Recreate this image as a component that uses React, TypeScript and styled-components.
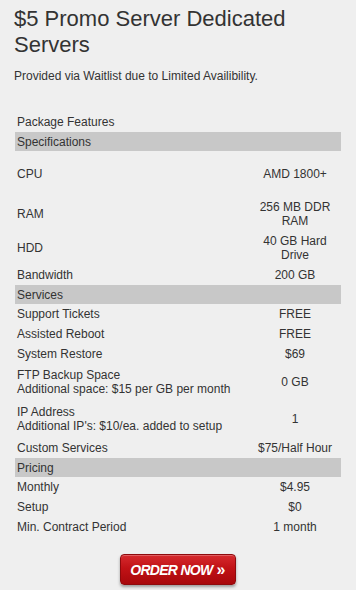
import React from "react"
import styled, { createGlobalStyle } from "styled-components"

interface Row {
  label: string
  note?: string
  value: string
}

interface Section {
  title: string
  rows: Row[]
}

const sections: Section[] = [
  {
    title: "Specifications",
    rows: [
      { label: "CPU", value: "AMD 1800+" },
      { label: "RAM", value: "256 MB DDR RAM" },
      { label: "HDD", value: "40 GB Hard Drive" },
      { label: "Bandwidth", value: "200 GB" }
    ]
  },
  {
    title: "Services",
    rows: [
      { label: "Support Tickets", value: "FREE" },
      { label: "Assisted Reboot", value: "FREE" },
      { label: "System Restore", value: "$69" },
      { label: "FTP Backup Space", note: "Additional space: $15 per GB per month", value: "0 GB" },
      { label: "IP Address", note: "Additional IP's: $10/ea. added to setup", value: "1" },
      { label: "Custom Services", value: "$75/Half Hour" }
    ]
  },
  {
    title: "Pricing",
    rows: [
      { label: "Monthly", value: "$4.95" },
      { label: "Setup", value: "$0" },
      { label: "Min. Contract Period", value: "1 month" }
    ]
  }
]

export default class App extends React.Component {
  render() {
    return (
      <>
        <GlobalStyle />
        <Page>
          <Title>$5 Promo Server Dedicated Servers</Title>
          <Intro>Provided via Waitlist due to Limited Availibility.</Intro>

          <Table>
            <colgroup>
              <col />
              <col style={{ width: 92 }} />
            </colgroup>
            <tbody>
              <tr>
                <Label colSpan={2}>Package Features</Label>
              </tr>
              {sections.map((section, i) => (
                <React.Fragment key={section.title}>
                  <tr>
                    <Bar colSpan={2}>{section.title}</Bar>
                  </tr>
                  {section.rows.map((row, j) => (
                    <tr key={row.label}>
                      <Label $tall={i === 0 && j === 0} $note={!!row.note}>
                        {row.label}
                        {row.note && (
                          <>
                            <br />
                            {row.note}
                          </>
                        )}
                      </Label>
                      <Value $tall={i === 0 && j === 0} $note={!!row.note}>{row.value}</Value>
                    </tr>
                  ))}
                </React.Fragment>
              ))}
            </tbody>
          </Table>

          <ButtonRow>
            <OrderButton>ORDER NOW <Arrows>»</Arrows></OrderButton>
          </ButtonRow>
        </Page>
      </>
    )
  }
}

const GlobalStyle = createGlobalStyle`
  html, body {
    margin: 0;
    padding: 0;
    background: #efefef;
  }
  body {
    font-family: "Liberation Sans", Arial, sans-serif;
    color: #333;
  }
`

const Page = styled.div`
  width: 356px;
  height: 590px;
  box-sizing: border-box;
  padding: 6px 14px 0 14px;
  background: #efefef;
  overflow: hidden;
`

const Title = styled.h1`
  margin: 0;
  font-size: 22px;
  line-height: 26px;
  font-weight: normal;
  color: #333;
  width: 290px;
`

const Intro = styled.p`
  margin: 11px 0 0 0;
  font-size: 12px;
  line-height: 14px;
  color: #333;
`

const Table = styled.table`
  margin: 29px 0 0 1px;
  width: 326px;
  border-collapse: collapse;
  table-layout: fixed;
  font-size: 12px;
  line-height: 14px;
  color: #333;
`

const Cell = styled.td<{ $tall?: boolean, $note?: boolean }>`
  padding: ${p => (p.$note ? "4px 2px 5px 2px" : "3px 2px")};
  height: ${p => (p.$tall ? "40px" : "auto")};
  vertical-align: middle;
`

const Label = styled(Cell)`
  text-align: left;
`

const Value = styled(Cell)`
  text-align: center;
`

const Bar = styled.td`
  background: #c8c8c8;
  padding: 3px 2px 2px 2px;
  text-align: left;
`

const ButtonRow = styled.div`
  display: flex;
  justify-content: center;
  padding-top: 17px;
  padding-right: 1px;
`

const OrderButton = styled.button`
  width: 116px;
  height: 31px;
  border: 1px solid #8e0a0d;
  border-radius: 4px;
  background: linear-gradient(to bottom, #d62a2e 0%, #c11216 45%, #a8080c 100%);
  box-shadow: 0 2px 3px rgba(0, 0, 0, 0.35), inset 0 1px 0 rgba(255, 255, 255, 0.25);
  color: #fff;
  font-family: "Liberation Sans", Arial, sans-serif;
  font-size: 14px;
  font-weight: bold;
  font-style: italic;
  letter-spacing: -0.7px;
  padding: 0;
  cursor: pointer;
  display: flex;
  align-items: center;
  justify-content: center;
  gap: 4px;
`

const Arrows = styled.span`
  font-size: 16px;
  font-style: normal;
  line-height: 13px;
  margin-top: -1px;
`
